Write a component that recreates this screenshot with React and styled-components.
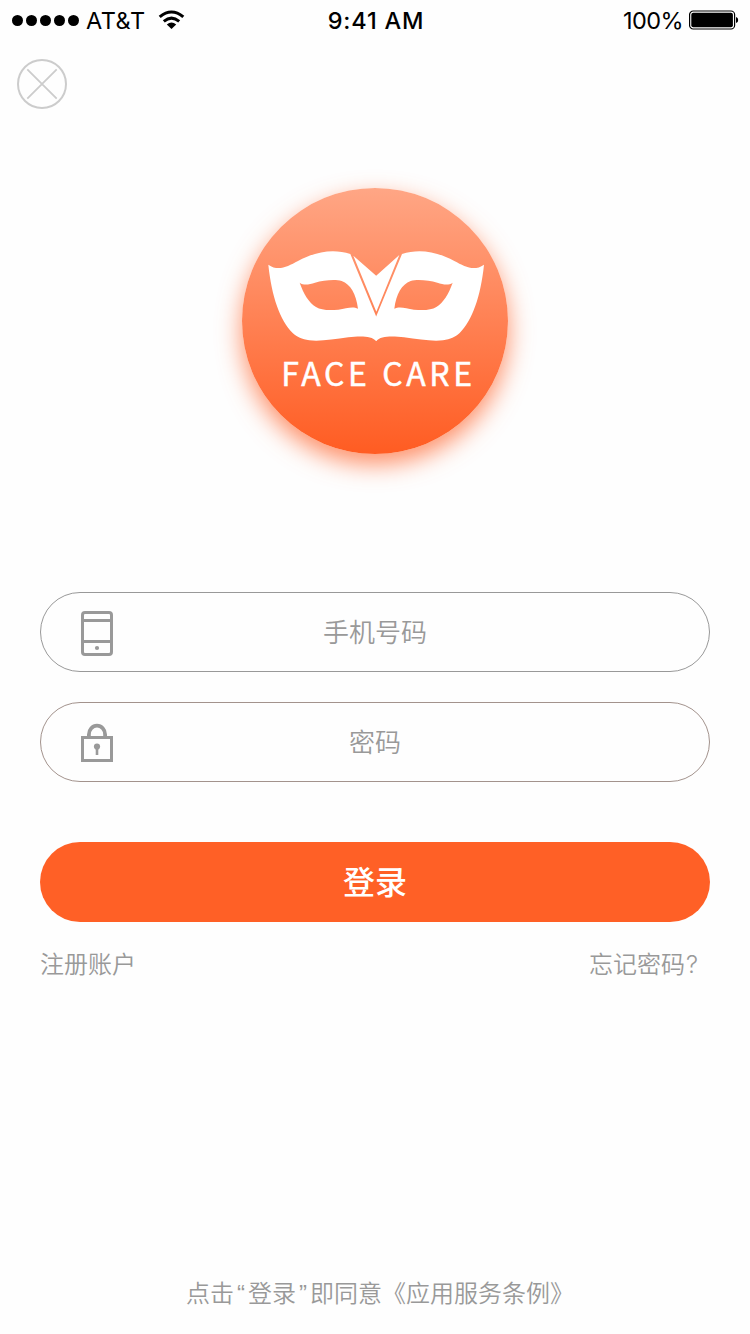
import React from "react";
import styled, { createGlobalStyle } from "styled-components";

const GlobalStyle = createGlobalStyle`
  *, *::before, *::after { box-sizing: border-box; }
  body {
    margin: 0;
    background: #fefefe;
    font-family: "Noto Sans CJK SC", sans-serif;
  }
  button, input { font-family: inherit; }
`;

const Screen = styled.main`
  display: flex;
  flex-direction: column;
  width: 750px;
  height: 1334px;
  background: #fefefe;
  overflow: hidden;
`;

const StatusBar = styled.header`
  display: grid;
  grid-template-columns: 1fr auto 1fr;
  align-items: center;
  height: 40px;
  padding: 0 12px;
  color: #000;
  font: 400 24px/40px Inter, sans-serif;
`;

const StatusGroup = styled.div`
  display: flex;
  align-items: center;
  justify-content: ${(p) => (p.$end ? "flex-end" : "flex-start")};
`;

const SignalDots = styled.div`
  display: flex;
  gap: 3px;
  margin-right: 7px;
`;

const Dot = styled.i`
  width: 11px;
  height: 11px;
  border-radius: 50%;
  background: #000;
`;

const StatusText = styled.span`
  padding-top: 2px;
  font-size: 23.5px;
  line-height: 38px;
  white-space: nowrap;
`;

const Carrier = styled(StatusText)`
  width: 59px;
  margin-right: 13px;
  letter-spacing: 0.5px;
`;

const Clock = styled(StatusText)`
  font-weight: 550;
  letter-spacing: 0.8px;
  padding-left: 2px;
`;

const Percent = styled(StatusText)`
  margin-right: 6px;
  letter-spacing: -0.6px;
`;

const BatteryIcon = styled.svg`
  display: block;
  margin-right: -1px;
`;

const CloseButton = styled.button`
  display: block;
  width: 50px;
  height: 50px;
  margin: 19px 0 0 17px;
  padding: 0;
  border: 0;
  background: none;
  svg { display: block; }
`;

const Logo = styled.div`
  align-self: center;
  display: flex;
  flex-direction: column;
  align-items: center;
  width: 266px;
  height: 266px;
  margin-top: 79px;
  padding: 62px 0 0 3px;
  border-radius: 50%;
  background: linear-gradient(#ffa685, #ff5c22);
  box-shadow: 0 10px 25px rgba(255, 96, 38, 0.7);
`;

const Brand = styled.div`
  margin-top: 6px;
  padding-left: 4px;
  color: #fff;
  font-size: 32px;
  font-weight: 400;
  line-height: 48px;
  letter-spacing: 3.6px;
  word-spacing: 1px;
  white-space: nowrap;
  -webkit-text-stroke: 0.5px #fff;
`;

const Form = styled.form`
  display: flex;
  flex-direction: column;
  gap: 30px;
  margin: 138px 40px 0;
`;

const Field = styled.label`
  display: grid;
  grid-template-columns: 32px 1fr 32px;
  align-items: center;
  height: 80px;
  padding: 0 40px;
  border: 1px solid ${(p) => p.$border};
  border-radius: 40px;
  svg { margin-top: 2px; }
`;

const FieldInput = styled.input`
  width: 100%;
  height: 48px;
  padding: 0 0 3px;
  border: 0;
  outline: 0;
  background: none;
  color: #999;
  font-size: 26px;
  font-weight: 350;
  text-align: center;
  &::placeholder { color: #999; opacity: 1; }
`;

const LoginButton = styled.button`
  height: 80px;
  margin-top: 30px;
  padding: 0 0 3px;
  border: 0;
  border-radius: 40px;
  background: #ff6026;
  color: #fff;
  font-size: 32px;
  font-weight: 500;
  line-height: 77px;
`;

const Links = styled.nav`
  display: flex;
  justify-content: space-between;
  margin: 23px 51px 0 40px;
`;

const TextLink = styled.a`
  color: #999;
  font-size: 24px;
  font-weight: 350;
  line-height: 36px;
  white-space: nowrap;
`;

const Latin = styled.span`
  display: inline-block;
  width: ${(p) => p.$width}px;
  font-family: ${(p) => (p.$quote ? '"Liberation Sans"' : "Inter")}, sans-serif;
  font-weight: ${(p) => (p.$quote ? 400 : 300)};
  line-height: 1;
  text-align: center;
`;

const Terms = styled.p`
  margin: auto 0 24px;
  padding-left: 10px;
  color: #999;
  font-size: 24px;
  font-weight: 350;
  line-height: 36px;
  text-align: center;
  white-space: nowrap;
`;

function Wifi() {
  return (
    <svg width="27" height="20" viewBox="0 0 27 20" fill="none" stroke="#000">
      <path d="M1.7 6.9Q13.5 -2.9 25.3 6.9" strokeWidth="3.1" />
      <path d="M5.8 11.3Q13.5 4.9 21.2 11.3" strokeWidth="3" />
      <path d="M8.8 14.4Q13.5 10.6 18.2 14.4L13.5 19Z" fill="#000" stroke="none" />
    </svg>
  );
}

function Battery() {
  return (
    <BatteryIcon width="50" height="20" viewBox="0 0 50 20">
      <rect x="0.6" y="1" width="45" height="18" rx="3.6" fill="none" stroke="#000" strokeWidth="1.2" />
      <rect x="2.3" y="2.7" width="41.6" height="14.6" rx="2" />
      <path d="M47 7Q49.2 7.3 49.2 10Q49.2 12.7 47 13Z" />
    </BatteryIcon>
  );
}

function CloseIcon() {
  return (
    <svg width="50" height="50" viewBox="0 0 50 50" fill="none" stroke="#ccc" strokeWidth="2">
      <circle cx="25" cy="25" r="24" />
      <path d="M10.3 10.3L39.7 39.7M39.7 10.3L10.3 39.7" strokeWidth="1.8" />
    </svg>
  );
}

const MASK_HALF =
  "M175 314C205 335 232 320 264 303C320 273 372 266 421 282L499.5 472V543H498.5C485 526 445 528 415 532C370 538 330 545 298 541C275 537 262 531 248 519C210 480 185 410 175 314Z" +
  "M269 368C283 378 298 373 315 368C340 361 375 357 395 363C422 374 438 400 444 446C428 438 410 445 385 449C355 452 333 450 318 441C296 427 281 402 269 368Z";

function Mask() {
  return (
    <svg width="217" height="92" viewBox="174 270 651 276" fill="#fff" fillRule="evenodd">
      <path d={MASK_HALF} />
      <path d={MASK_HALF} transform="translate(997 0) scale(-1 1)" />
      <path d="M430 287L498.5 347L568 285L499 455Z" />
    </svg>
  );
}

function PhoneIcon() {
  return (
    <svg width="32" height="46" viewBox="0 0 32 46" fill="none" stroke="#999" strokeWidth="3">
      <rect x="1.5" y="2.5" width="29" height="42" rx="2.5" />
      <path d="M2 10.5H30M2 31.5H30" />
      <circle cx="16" cy="38" r="2.1" fill="#999" stroke="none" />
    </svg>
  );
}

function LockIcon() {
  return (
    <svg width="32" height="40" viewBox="0 0 32 40" fill="none" stroke="#999" strokeWidth="3">
      <rect x="1.5" y="14.5" width="29" height="23" />
      <path d="M7.9 14V11.5A8.1 8.8 0 0 1 24.1 11.5V14" strokeWidth="3.8" />
      <circle cx="16" cy="23.5" r="3.1" fill="#999" stroke="none" />
      <path d="M16 24V32" strokeWidth="2.6" />
    </svg>
  );
}

export default function App() {
  return (
    <>
      <GlobalStyle />
      <Screen>
        <StatusBar>
          <StatusGroup>
            <SignalDots>
              {[0, 1, 2, 3, 4].map((n) => (
                <Dot key={n} />
              ))}
            </SignalDots>
            <Carrier>AT&amp;T</Carrier>
            <Wifi />
          </StatusGroup>
          <Clock>9:41 AM</Clock>
          <StatusGroup $end>
            <Percent>100%</Percent>
            <Battery />
          </StatusGroup>
        </StatusBar>
        <CloseButton type="button" aria-label="关闭">
          <CloseIcon />
        </CloseButton>
        <Logo>
          <Mask />
          <Brand>FACE CARE</Brand>
        </Logo>
        <Form onSubmit={(e) => e.preventDefault()}>
          <Field $border="#999">
            <PhoneIcon />
            <FieldInput type="tel" placeholder="手机号码" />
          </Field>
          <Field $border="#a3938d">
            <LockIcon />
            <FieldInput type="password" placeholder="密码" />
          </Field>
          <LoginButton type="submit">登录</LoginButton>
        </Form>
        <Links>
          <TextLink>注册账户</TextLink>
          <TextLink>
            忘记密码<Latin $width={14}>?</Latin>
          </TextLink>
        </Links>
        <Terms>
          点击<Latin $quote $width={14}>“</Latin>登录<Latin $quote $width={14}>”</Latin>即同意《应用服务条例》
        </Terms>
      </Screen>
    </>
  );
}
